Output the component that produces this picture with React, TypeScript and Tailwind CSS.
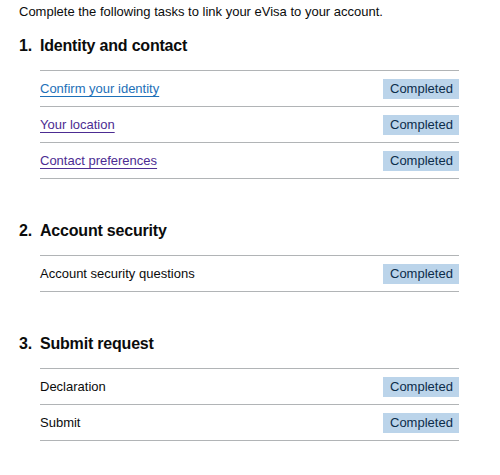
const sections = [
  {
    title: 'Identity and contact',
    tasks: [
      { name: 'Confirm your identity', link: 'blue' },
      { name: 'Your location', link: 'visited' },
      { name: 'Contact preferences', link: 'visited' },
    ],
  },
  {
    title: 'Account security',
    tasks: [{ name: 'Account security questions', link: '' }],
  },
  {
    title: 'Submit request',
    tasks: [
      { name: 'Declaration', link: '' },
      { name: 'Submit', link: '' },
    ],
  },
];

function TaskRow({ name, link }: { name: string; link: string }) {
  return (
    <li className="flex items-center justify-between h-[36px] border-b border-[#b1b4b6]">
      {link ? (
        <a
          href="#"
          className={`underline underline-offset-[3px] decoration-1 ${
            link === 'blue' ? 'text-[#1d70b8]' : 'text-[#4c2c92]'
          }`}
        >
          {name}
        </a>
      ) : (
        <span>{name}</span>
      )}
      <strong className="font-normal bg-[#bbd4ea] text-[#0c2d4a] h-[20px] leading-[20px] px-[7px] w-[76px] text-center">
        Completed
      </strong>
    </li>
  );
}

export default function App() {
  return (
    <div
      className="w-[500px] h-[475px] bg-white text-[#0b0c0c] pl-[19px] pr-[41px] pt-[2px]"
      style={{ fontFamily: '"Liberation Sans", Arial, sans-serif' }}
    >
      <p className="text-[13px] leading-[20px]">
        Complete the following tasks to link your eVisa to your account.
      </p>
      <ol className="text-[13px]">
        {sections.map((s, i) => (
          <li key={s.title} className={i === 0 ? 'mt-[11px]' : 'mt-[39px]'}>
            <h2 className="flex text-[16px] leading-[25px] font-bold tracking-[-0.2px] mb-[12px]">
              <span className="w-[21px]">{i + 1}.</span>
              <span>{s.title}</span>
            </h2>
            <ul className="ml-[21px] border-t border-[#b1b4b6]">
              {s.tasks.map(t => (
                <TaskRow key={t.name} {...t} />
              ))}
            </ul>
          </li>
        ))}
      </ol>
    </div>
  );
}
